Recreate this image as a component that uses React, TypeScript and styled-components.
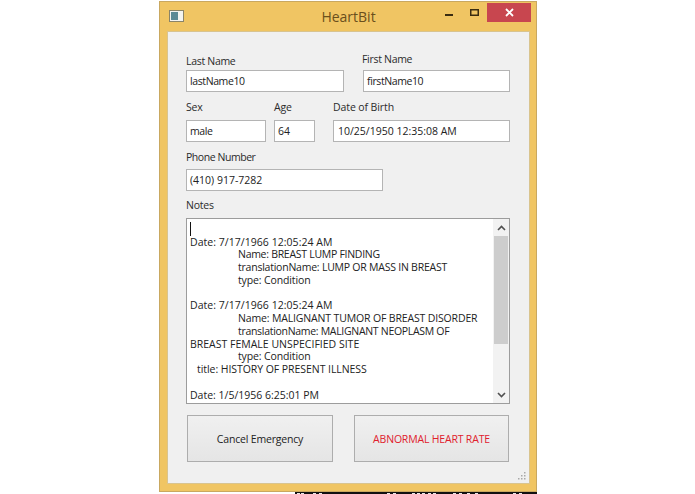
import styled, { createGlobalStyle } from 'styled-components';

const GlobalStyle = createGlobalStyle`
    html, body {
        margin: 0;
        padding: 0;
        background: #ffffff;
    }
    body {
        width: 695px;
        height: 494px;
        overflow: hidden;
        font-family: 'Open Sans', 'Liberation Sans', sans-serif;
    }
`;

const Page = styled.div`
    display: flex;
    flex-direction: column;
    align-items: flex-start;
    width: 695px;
    height: 494px;
    padding: 1px 0 0 159px;
    box-sizing: border-box;
`;

const Window = styled.div`
    display: flex;
    flex-direction: column;
    width: 378px;
    height: 491px;
    box-sizing: border-box;
    background: #f0c563;
    border: 1px solid #c9a860;
    padding: 0 6px 7px 7px;
`;

const TitleBar = styled.div`
    position: relative;
    flex: none;
    display: flex;
    align-items: center;
    justify-content: center;
    height: 29px;
`;

const AppIcon = styled.svg`
    position: absolute;
    left: 2px;
    top: 8px;
`;

const Title = styled.span`
    font-size: 14px;
    color: #6a4f1c;
`;

const Controls = styled.div`
    position: absolute;
    right: -1px;
    top: 1px;
    display: flex;
    align-items: flex-start;
`;

const ControlButton = styled.div`
    display: flex;
    align-items: center;
    justify-content: center;
    width: ${p => p.$w}px;
    height: 19px;
    background: ${p => (p.$close ? '#c8464f' : 'transparent')};
`;

const Client = styled.div`
    flex: 1;
    display: flex;
    flex-direction: column;
    position: relative;
    background: #f0f0f0;
    border: 1px solid #d9c48f;
    padding: 20px 19px 0 18px;
    box-sizing: border-box;
`;

const Row = styled.div`
    display: flex;
    margin-bottom: ${p => p.$mb ?? 0}px;
`;

const Field = styled.div`
    display: flex;
    flex-direction: column;
    width: ${p => p.$w}px;
    margin-right: ${p => p.$mr ?? 0}px;
`;

const Label = styled.label`
    box-sizing: border-box;
    height: ${p => p.$h ?? 15}px;
    padding-top: ${p => p.$pt ?? 0}px;
    margin-left: ${p => p.$dx ?? 0}px;
    font-size: 10.5px;
    line-height: 14px;
    letter-spacing: ${p => p.$track ?? -0.2}px;
    color: #2b2b2b;
    white-space: nowrap;
`;

const Input = styled.div`
    height: 22px;
    box-sizing: border-box;
    border: 1px solid #b4b4b4;
    background: #ffffff;
    padding: 0 3px 0 ${p => p.$pl ?? 3}px;
    font-size: 10.5px;
    line-height: 20px;
    letter-spacing: ${p => p.$track ?? 0}px;
    color: #222222;
    white-space: nowrap;
`;

const Notes = styled.div`
    display: flex;
    height: 186px;
    box-sizing: border-box;
    border: 1px solid #9c9c9c;
    background: #ffffff;
    margin-top: 5px;
`;

const NotesText = styled.div`
    flex: 1;
    padding: 3px 0 0 3px;
    font-size: 10.5px;
    line-height: 12.75px;
    color: #222222;
    overflow: hidden;
`;

const Caret = styled.div`
    width: 1px;
    height: 13.5px;
    background: #111111;
`;

const NoteLine = styled.div`
    height: 12.75px;
    white-space: nowrap;
    padding-left: ${p => p.$indent ?? 0}px;
    letter-spacing: ${p => p.$track ?? 0}px;
`;

const ScrollBar = styled.div`
    flex: none;
    display: flex;
    flex-direction: column;
    width: 16px;
    background: #f2f2f2;
`;

const ScrollArrow = styled.div`
    flex: none;
    display: flex;
    align-items: center;
    justify-content: center;
    height: 17px;
`;

const ScrollTrack = styled.div`
    flex: 1;
`;

const ScrollThumb = styled.div`
    height: 108px;
    margin: 0 1px;
    background: #cdcdcd;
`;

const Buttons = styled.div`
    display: flex;
    justify-content: space-between;
    margin: 11px 1px 0 1px;
`;

const Button = styled.div`
    display: flex;
    align-items: center;
    justify-content: center;
    width: ${p => p.$w}px;
    height: 47px;
    box-sizing: border-box;
    border: 1px solid #adadad;
    background: linear-gradient(#f0f0f0, #e5e5e5);
    font-size: 10.5px;
    letter-spacing: -0.18px;
    color: ${p => (p.$alert ? '#e0202c' : '#222222')};
`;

const Grip = styled.svg`
    position: absolute;
    right: 3px;
    bottom: 3px;
`;

const BottomStrip = styled.svg`
    display: block;
    margin-left: 136px;
`;

const notes: { text: string; indent?: number; track?: number }[] = [
    { text: 'Date: 7/17/1966 12:05:24 AM', track: 0.04 },
    { text: 'Name: BREAST LUMP FINDING', indent: 48, track: -0.28 },
    { text: 'translationName: LUMP OR MASS IN BREAST', indent: 48, track: -0.23 },
    { text: 'type: Condition', indent: 48, track: -0.13 },
    { text: '' },
    { text: 'Date: 7/17/1966 12:05:24 AM', track: 0.04 },
    { text: 'Name: MALIGNANT TUMOR OF BREAST DISORDER', indent: 48, track: -0.15 },
    { text: 'translationName: MALIGNANT NEOPLASM OF', indent: 48, track: -0.3 },
    { text: 'BREAST FEMALE UNSPECIFIED SITE' },
    { text: 'type: Condition', indent: 48, track: -0.13 },
    { text: 'title: HISTORY OF PRESENT ILLNESS', indent: 7, track: -0.06 },
    { text: '' },
    { text: 'Date: 1/5/1956 6:25:01 PM' },
];

// tops of the white letters cut off by the bottom of the shot
const specks = [2, 6, 18, 24, 92, 98, 117, 122, 127, 133, 138, 158, 164, 172, 180, 218, 224];

const App = () => {
    return (
        <Page>
            <GlobalStyle />
            <Window>
                <TitleBar>
                    <AppIcon width="15" height="12" viewBox="0 0 15 12">
                        <rect x="0.5" y="0.5" width="14" height="11" fill="#f4f4f0" stroke="#8a8468" />
                        <rect x="2" y="2" width="7" height="8" fill="#5b8a96" />
                    </AppIcon>
                    <Title>HeartBit</Title>
                    <Controls>
                        <ControlButton $w={24}>
                            <svg width="8" height="7" viewBox="0 0 8 7">
                                <rect width="8" height="2" y="5" fill="#3a2c10" />
                            </svg>
                        </ControlButton>
                        <ControlButton $w={26}>
                            <svg width="9" height="7" viewBox="0 0 9 7">
                                <rect x="0.75" y="0.75" width="7.5" height="5.5" fill="none" stroke="#3a2c10" strokeWidth="1.5" />
                            </svg>
                        </ControlButton>
                        <ControlButton $w={44} $close>
                            <svg width="9" height="9" viewBox="0 0 9 9">
                                <path d="M1 1 L8 8 M8 1 L1 8" stroke="#ffffff" strokeWidth="1.8" />
                            </svg>
                        </ControlButton>
                    </Controls>
                </TitleBar>
                <Client>
                    <Row $mb={8}>
                        <Field $w={158} $mr={19}>
                            <Label $h={18} $pt={2} $track={-0.3}>Last Name</Label>
                            <Input $track={-0.4}>lastName10</Input>
                        </Field>
                        <Field $w={147}>
                            <Label $h={18} $dx={-1} $track={-0.3}>First Name</Label>
                            <Input $track={-0.4}>firstName10</Input>
                        </Field>
                    </Row>
                    <Row $mb={8}>
                        <Field $w={80} $mr={8}>
                            <Label $h={20}>Sex</Label>
                            <Input $track={-0.4}>male</Input>
                        </Field>
                        <Field $w={41} $mr={18}>
                            <Label $h={20}>Age</Label>
                            <Input>64</Input>
                        </Field>
                        <Field $w={177}>
                            <Label $h={20} $track={-0.1}>Date of Birth</Label>
                            <Input $pl={4}>10/25/1950 12:35:08 AM</Input>
                        </Field>
                    </Row>
                    <Row $mb={7}>
                        <Field $w={197}>
                            <Label $h={19} $track={-0.45}>Phone Number</Label>
                            <Input>(410) 917-7282</Input>
                        </Field>
                    </Row>
                    <Label $h={15}>Notes</Label>
                    <Notes>
                        <NotesText>
                            <Caret />
                            {notes.map((line, i) => (
                                <NoteLine key={i} $indent={line.indent} $track={line.track}>
                                    {line.text}
                                </NoteLine>
                            ))}
                        </NotesText>
                        <ScrollBar>
                            <ScrollArrow>
                                <svg width="9" height="6" viewBox="0 0 9 6">
                                    <path d="M1 5 L4.5 1.5 L8 5" fill="none" stroke="#505050" strokeWidth="1.6" />
                                </svg>
                            </ScrollArrow>
                            <ScrollThumb />
                            <ScrollTrack />
                            <ScrollArrow>
                                <svg width="9" height="6" viewBox="0 0 9 6">
                                    <path d="M1 1 L4.5 4.5 L8 1" fill="none" stroke="#505050" strokeWidth="1.6" />
                                </svg>
                            </ScrollArrow>
                        </ScrollBar>
                    </Notes>
                    <Buttons>
                        <Button $w={146}>Cancel Emergency</Button>
                        <Button $w={155} $alert>
                            ABNORMAL HEART RATE
                        </Button>
                    </Buttons>
                    <Grip width="9" height="9" viewBox="0 0 9 9">
                        <g fill="#a8a8a8">
                            <rect x="7" y="1" width="1.5" height="1.5" />
                            <rect x="4" y="4" width="1.5" height="1.5" />
                            <rect x="7" y="4" width="1.5" height="1.5" />
                            <rect x="1" y="7" width="1.5" height="1.5" />
                            <rect x="4" y="7" width="1.5" height="1.5" />
                            <rect x="7" y="7" width="1.5" height="1.5" />
                        </g>
                    </Grip>
                </Client>
            </Window>
            <BottomStrip width="242" height="2" viewBox="0 0 242 2">
                <rect width="242" height="2" fill="#111111" />
                {specks.map(x => (
                    <rect key={x} x={x} y="1" width="3" height="1" fill="#e8e8e8" />
                ))}
            </BottomStrip>
        </Page>
    );
};

export default App;
